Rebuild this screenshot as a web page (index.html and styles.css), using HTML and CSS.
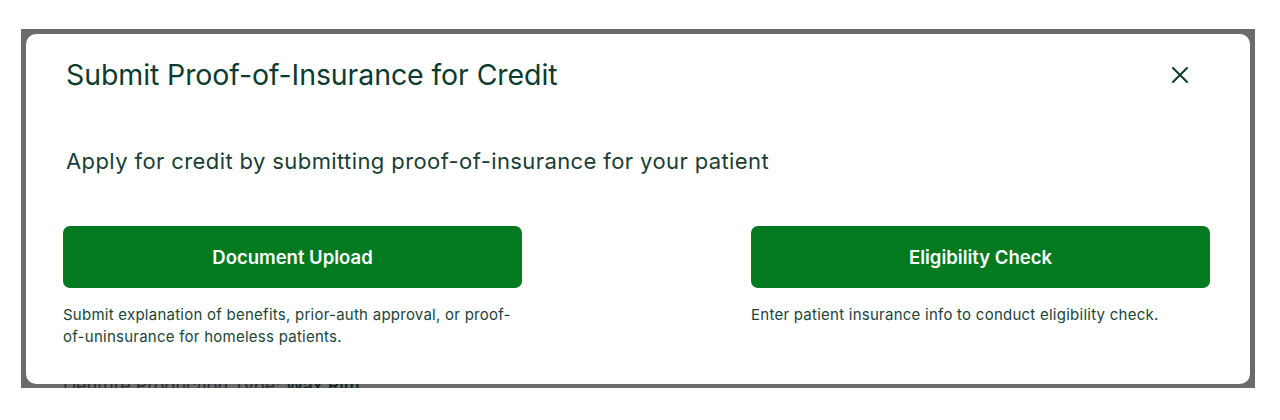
FILE: index.html
```html
<!DOCTYPE html>
<html lang="en">
<head>
    <meta charset="UTF-8">
    <meta name="viewport" content="width=device-width, initial-scale=1.0">
    <title>Submit Proof-of-Insurance for Credit</title>
    <link rel="stylesheet" href="styles.css">
</head>
<body>
    <div class="backdrop">
        <div class="modal">
            <div class="modal-header">
                <h2>Submit Proof-of-Insurance for Credit</h2>
                <button class="close-btn" aria-label="Close">
                    <svg width="18" height="18" viewBox="0 0 18 18">
                        <path d="M2 2 L16 16 M16 2 L2 16" stroke="#0e3b2f" stroke-width="2" stroke-linecap="round"/>
                    </svg>
                </button>
            </div>
            <p class="lead">Apply for credit by submitting proof-of-insurance for your patient</p>
            <div class="options">
                <div class="option">
                    <button class="green-btn">Document Upload</button>
                    <p class="hint">Submit explanation of benefits, prior-auth approval, or proof-of-uninsurance for homeless patients.</p>
                </div>
                <div class="option">
                    <button class="green-btn">Eligibility Check</button>
                    <p class="hint">Enter patient insurance info to conduct eligibility check.</p>
                </div>
            </div>
        </div>
        <div class="behind">Denture Production Type: <b>Wax Rim</b></div>
    </div>
</body>
</html>
```

FILE: styles.css
```css
body {
    margin: 0;
    background: #fff;
    font-family: Inter, "Noto Sans", sans-serif;
}
.backdrop {
    margin: 29px 0 0 21px;
    width: 1234px;
    height: 359px;
    box-sizing: border-box;
    padding: 5px 5px 0 5px;
    background: #6b6b6b;
    overflow: hidden;
}
.modal {
    position: relative;
    z-index: 1;
    height: 350px;
    box-sizing: border-box;
    padding: 22px 40px 0 37px;
    background: #fff;
    border-radius: 10px;
}
.modal-header {
    display: flex;
    justify-content: space-between;
    align-items: center;
}
.modal-header h2 {
    margin: 0 0 0 3px;
    font-size: 28.5px;
    line-height: 38px;
    font-weight: 400;
    letter-spacing: -0.1px;
    color: #0e3b2f;
}
.close-btn {
    background: none;
    border: none;
    padding: 0;
    margin-right: 21px;
    display: flex;
    cursor: pointer;
}
.lead {
    margin: 53px 0 0 3px;
    font-size: 22px;
    line-height: 28px;
    letter-spacing: 0.4px;
    color: #1a3d33;
}
.options {
    display: flex;
    justify-content: space-between;
    margin-top: 51px;
}
.option {
    width: 459px;
}
.green-btn {
    width: 100%;
    height: 62px;
    border: none;
    border-radius: 7px;
    background: #037a1f;
    color: #fff;
    font-family: Inter, sans-serif;
    font-size: 18.5px;
    font-weight: 600;
    padding-bottom: 2px;
    cursor: pointer;
}
.hint {
    margin: 16px 0 0;
    font-size: 15px;
    line-height: 22px;
    letter-spacing: 0.25px;
    color: #21443a;
}
.behind {
    margin: -9px 0 0 37px;
    font-size: 18px;
    line-height: 22px;
    color: #2e2e2e;
}
.behind b {
    font-weight: 500;
    color: #13261f;
}
```
